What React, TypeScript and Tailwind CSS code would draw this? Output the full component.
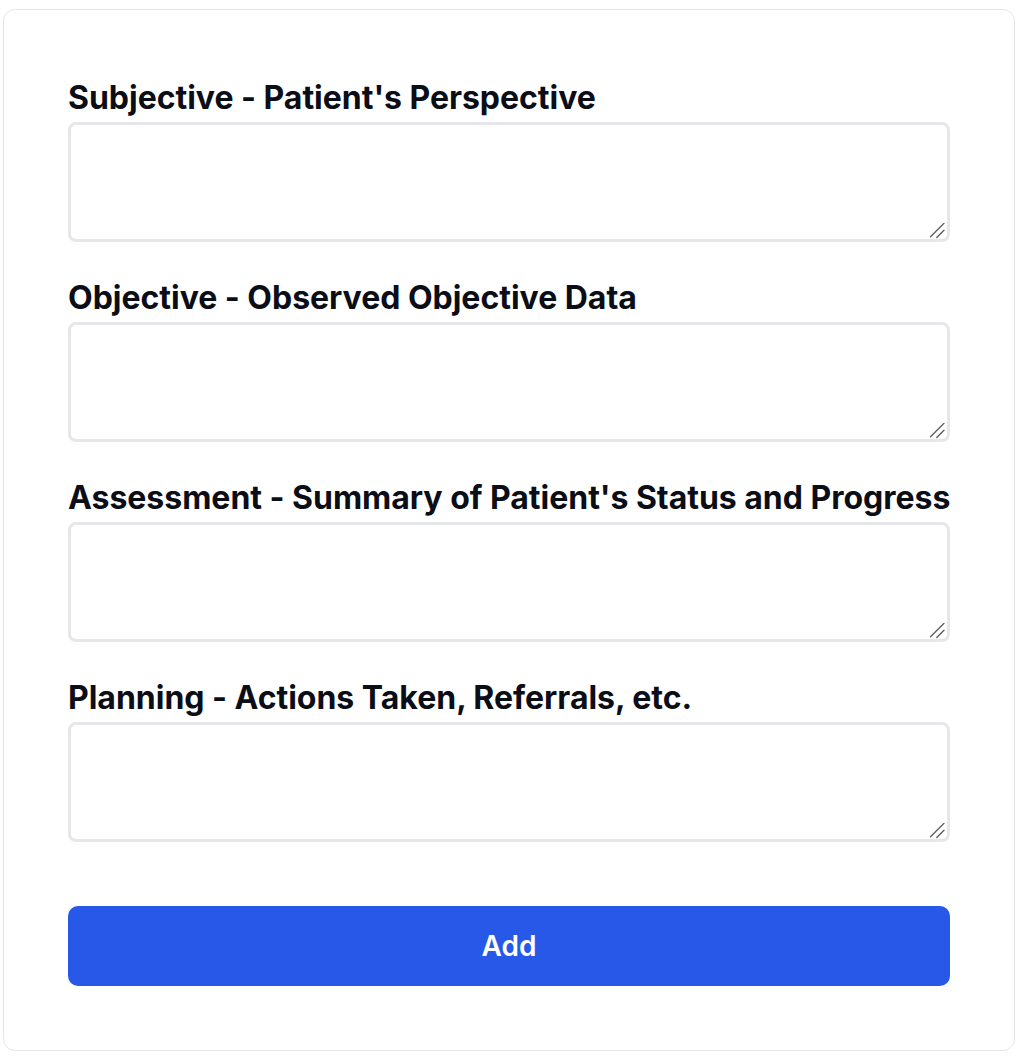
import React from "react";

const fields = [
  "Subjective - Patient's Perspective",
  "Objective - Observed Objective Data",
  "Assessment - Summary of Patient's Status and Progress",
  "Planning - Actions Taken, Referrals, etc.",
];

function Grip() {
  return (
    <svg className="absolute right-[4px] bottom-[3px] pointer-events-none" width="16" height="16" viewBox="0 0 16 16">
      <line x1="0.5" y1="13.8" x2="14" y2="0.3" stroke="#5a5a5a" strokeWidth="1.3" strokeLinecap="round" />
      <line x1="6.8" y1="14.5" x2="14" y2="7.3" stroke="#5a5a5a" strokeWidth="1.3" strokeLinecap="round" />
    </svg>
  );
}

export default function App() {
  return (
    <div className="min-h-[1060px] bg-white pt-[9px] pl-[3px] pr-[5px]" style={{ fontFamily: "Inter, 'Noto Sans', sans-serif" }}>
      <div className="w-[1012px] h-[1042px] rounded-xl border border-gray-200 bg-white pt-[70px] px-[64px]">
        <div className="flex flex-col gap-[38px] w-[882px]">
          {fields.map((f) => (
            <div key={f} className="flex flex-col gap-[6px]">
              <label className="text-[32px] leading-[36px] font-bold text-[#0b0d17] whitespace-nowrap tracking-[-0.02px]">{f}</label>
              <div className="relative">
                <textarea className="block h-[120px] w-full resize-none rounded-lg border-[3px] border-gray-200 bg-white outline-none" />
                <Grip />
              </div>
            </div>
          ))}
        </div>
        <button className="mt-[64px] w-[882px] h-[80px] rounded-[10px] bg-[#2758e8] text-white text-[28px] font-semibold">
          Add
        </button>
      </div>
    </div>
  );
}
